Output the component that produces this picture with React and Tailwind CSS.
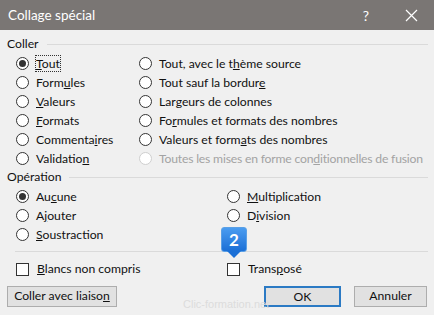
import React from "react";

const F = { fontFamily: 'Lato, "Noto Sans", sans-serif' };

function Radio({ checked, disabled }) {
  return (
    <span
      className={
        "flex h-[13px] w-[13px] shrink-0 items-center justify-center rounded-full border bg-white " +
        (disabled ? "border-[#cfcfcf] bg-[#f5f5f5]" : "border-[#333333]")
      }
    >
      {checked && <span className="h-[7px] w-[7px] rounded-full bg-[#333333]" />}
    </span>
  );
}

function RItem({ children, checked, disabled, focus }) {
  return (
    <div className="flex h-[19px] items-center gap-[7px]">
      <Radio checked={checked} disabled={disabled} />
      <span
        className={
          "whitespace-nowrap leading-[15px] " +
          (disabled ? "text-[#a3a3a3] " : "text-[#111111] ") +
          (focus ? "outline outline-1 outline-dotted outline-[#333] outline-offset-0" : "")
        }
      >
        {children}
      </span>
    </div>
  );
}

function Check({ children }) {
  return (
    <div className="flex h-[19px] items-center gap-[8px]">
      <span className="h-[13px] w-[13px] shrink-0 border border-[#333333] bg-white" />
      <span className="whitespace-nowrap text-[#111111]">{children}</span>
    </div>
  );
}

function Header({ children }) {
  return (
    <div className="flex h-[16px] items-center gap-[8px]">
      <span className="text-[#111111]">{children}</span>
      <span className="h-px flex-1 bg-[#dadada]" />
    </div>
  );
}

export default function App() {
  return (
    <div
      className="relative h-[315px] w-[434px] overflow-hidden bg-[#f0f0f0] text-[12.2px]"
      style={F}
    >
      <div className="flex h-[30px] items-center bg-[#7a7674] pl-[8px] text-white">
        <span className="flex-1 text-[13.5px]">Collage spécial</span>
        <span className="w-[14px] text-center text-[14px]">?</span>
        <span className="ml-[31px] mr-[16px] flex w-[14px] items-center justify-center">
          <svg width="13" height="13" viewBox="0 0 13 13">
            <path d="M1 1L12 12M12 1L1 12" stroke="white" strokeWidth="1.2" />
          </svg>
        </span>
      </div>

      <div className="pl-[7px] pr-[6px]">
        <div className="mt-[6px]">
          <Header>Coller</Header>
        </div>
        <div className="mt-[2px] flex pl-[9px]">
          <div className="w-[123px] shrink-0">
            <RItem checked focus><u>T</u>out</RItem>
            <RItem>Form<u>u</u>les</RItem>
            <RItem><u>V</u>aleurs</RItem>
            <RItem><u>F</u>ormats</RItem>
            <RItem>Commenta<u>i</u>res</RItem>
            <RItem>Validatio<u>n</u></RItem>
          </div>
          <div>
            <RItem>Tout, avec le t<u>h</u>ème source</RItem>
            <RItem>Tout sauf la bordur<u>e</u></RItem>
            <RItem>Lar<u>g</u>eurs de colonnes</RItem>
            <RItem>Fo<u>r</u>mules et formats des nombres</RItem>
            <RItem>Valeurs et form<u>a</u>ts des nombres</RItem>
            <RItem disabled>
              <span className="tracking-[-0.2px]">Toutes les mises en forme con<u>d</u>itionnelles de fusion</span>
            </RItem>
          </div>
        </div>

        <div className="mt-[1px]">
          <Header>Opération</Header>
        </div>
        <div className="mt-[2px] flex pl-[9px]">
          <div className="w-[211px] shrink-0">
            <RItem checked>Au<u>c</u>une</RItem>
            <RItem>A<u>j</u>outer</RItem>
            <RItem><u>S</u>oustraction</RItem>
          </div>
          <div>
            <RItem><u>M</u>ultiplication</RItem>
            <RItem>D<u>i</u>vision</RItem>
          </div>
        </div>

        <div className="ml-[8px] mt-[7px] h-px bg-[#dadada]" />

        <div className="mt-[8px] flex pl-[9px]">
          <div className="w-[211px] shrink-0">
            <Check><u>B</u>lancs non compris</Check>
          </div>
          <Check>Trans<u>p</u>osé</Check>
        </div>

        <div className="mt-[7px] flex items-center">
          <button className="h-[21px] w-[110px] border border-[#adadad] bg-[#e1e1e1] text-[#111111]">
            Coller avec liaiso<u>n</u>
          </button>
          <div className="flex-1" />
          <button className="h-[21px] w-[77px] border-2 border-[#2b7ac4] bg-[#e1e1e1] text-[#111111]">
            OK
          </button>
          <button className="ml-[13px] mr-[1px] h-[21px] w-[73px] border border-[#adadad] bg-[#e1e1e1] text-[#111111]">
            Annuler
          </button>
        </div>
      </div>

      <div
        className="absolute left-[183px] top-[296px] text-[11px] text-[#dcdcdc]"
        style={{ fontFamily: '"Liberation Sans", Arial, sans-serif' }}
      >
        Clic-formation.net
      </div>

      <div className="absolute left-[221px] top-[227px] flex flex-col items-center">
        <div className="flex h-[25px] w-[26px] items-center justify-center rounded-[3px] border border-[#5aa0e6] bg-gradient-to-b from-[#4a9cf0] to-[#1a6fd6] text-[17px] font-bold text-white">
          2
        </div>
        <svg width="14" height="7" viewBox="0 0 14 7" className="-mt-px">
          <path d="M0 0L7 7L14 0Z" fill="#1a6fd6" />
        </svg>
      </div>
    </div>
  );
}
